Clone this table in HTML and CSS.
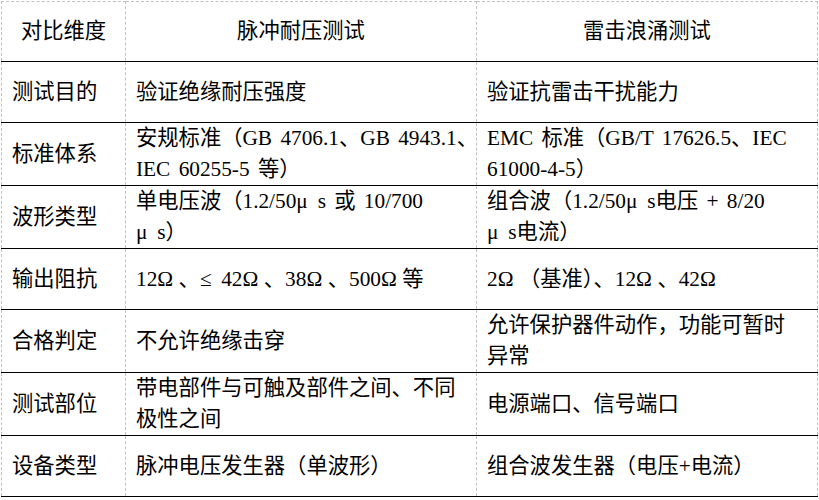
FILE: index.html
```html
<!DOCTYPE html>
<html lang="zh-CN">
<head>
<meta charset="utf-8">
<title>脉冲耐压测试与雷击浪涌测试对比</title>
<link rel="stylesheet" href="styles.css">
</head>
<body>
<table class="cmp">
  <colgroup><col class="c1"><col class="c2"><col class="c3"></colgroup>
  <thead>
    <tr><th>对比维度</th><th>脉冲耐压测试</th><th>雷击浪涌测试</th></tr>
  </thead>
  <tbody>
    <tr><td>测试目的</td><td>验证绝缘耐压强度</td><td>验证抗雷击干扰能力</td></tr>
    <tr><td>标准体系</td><td>安规标准（GB 4706.1、GB 4943.1、<br>IEC 60255-5 等）</td><td>EMC 标准（GB/T 17626.5、IEC<br>61000-4-5）</td></tr>
    <tr><td>波形类型</td><td>单电压波（1.2/50<span class="fw">μ</span>s 或 10/700<br><span class="fw">μ</span>s）</td><td>组合波（1.2/50<span class="fw">μ</span>s电压 + 8/20<br><span class="fw">μ</span>s电流）</td></tr>
    <tr><td>输出阻抗</td><td>12<span class="fw">Ω</span>、<span class="fw">≤</span>42<span class="fw">Ω</span>、38<span class="fw">Ω</span>、500<span class="fw">Ω</span>等</td><td>2<span class="fw">Ω</span>（基准）、12<span class="fw">Ω</span>、42<span class="fw">Ω</span></td></tr>
    <tr><td>合格判定</td><td>不允许绝缘击穿</td><td>允许保护器件动作，功能可暂时<br>异常</td></tr>
    <tr><td>测试部位</td><td>带电部件与可触及部件之间、不同<br>极性之间</td><td>电源端口、信号端口</td></tr>
    <tr><td>设备类型</td><td>脉冲电压发生器（单波形）</td><td>组合波发生器（电压+电流）</td></tr>
  </tbody>
</table>
</body>
</html>
```
FILE: styles.css
```css
html, body {
  margin: 0;
  background: #fff;
}
body {
  padding: 1px 0 0 1px;
}
.cmp {
  border-collapse: collapse;
  table-layout: fixed;
  width: 816px;
  font-family: "Liberation Serif", "Noto Sans CJK SC", serif;
  font-size: 21.3px;
  color: #000;
}
.c1 { width: 124px; }
.c2 { width: 351px; }
.c3 { width: 341px; }
.cmp th,
.cmp td {
  border-left: 1px dashed #c0c0c0;
  border-right: 1px dashed #c0c0c0;
  border-bottom: 1px solid #000;
  padding: 0 10px;
  line-height: 31px;
  vertical-align: middle;
  text-align: left;
  font-weight: normal;
  word-spacing: 3px;
  white-space: nowrap;
}
.cmp th {
  border-top: 1px dashed #c0c0c0;
  height: 59px;
  text-align: center;
}
.cmp td {
  height: 60px;
}
.fw {
  display: inline-block;
  width: 1em;
  text-align: left;
}
```
